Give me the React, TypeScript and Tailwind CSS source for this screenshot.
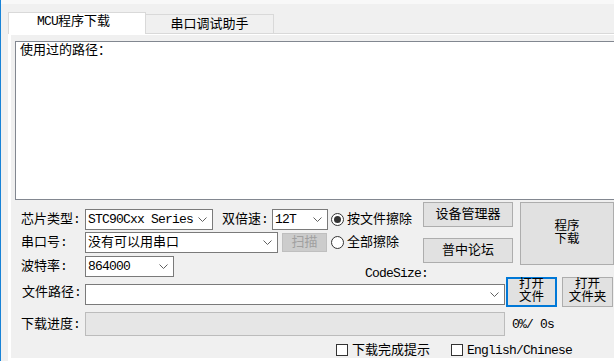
import React from "react";

function Chevron() {
  return (
    <svg width="9" height="5" viewBox="0 0 9 5" className="shrink-0">
      <path d="M0.5 0.5 L4.5 4.5 L8.5 0.5" fill="none" stroke="#606060" strokeWidth="1" />
    </svg>
  );
}

function Select({ className, children }: { className: string; children: React.ReactNode }) {
  return (
    <div
      className={
        "flex items-center justify-between h-[21px] border border-[#7a7a7a] bg-white pl-[2px] pr-[5px] shrink-0 " +
        className
      }
    >
      <span className="whitespace-pre">{children}</span>
      <Chevron />
    </div>
  );
}

function Label({ children }: { children: React.ReactNode }) {
  return <div className="w-[64px] shrink-0 whitespace-pre">{children}</div>;
}

function Radio({ checked, children, className }: { checked?: boolean; children: React.ReactNode; className: string }) {
  return (
    <div className={"flex items-center shrink-0 " + className}>
      <div className="w-[13px] h-[13px] rounded-full border border-[#333333] bg-white flex items-center justify-center">
        {checked ? <div className="w-[7px] h-[7px] rounded-full bg-[#333333]" /> : null}
      </div>
      <span className="ml-[3px]">{children}</span>
    </div>
  );
}

function Check({ children, className }: { children: React.ReactNode; className: string }) {
  return (
    <div className={"flex items-center shrink-0 " + className}>
      <div className="w-[12px] h-[12px] border border-[#333333] bg-white" />
      <span className="ml-[4px]">{children}</span>
    </div>
  );
}

function Latin({ children, className = "" }: { children: React.ReactNode; className?: string }) {
  return <span className={"text-[13px] tracking-[-0.8px] whitespace-pre " + className}>{children}</span>;
}

export default function App() {
  return (
    <div className="w-[614px] h-[361px] overflow-hidden bg-[#f0f0f0] border-l border-[#1883d7] flex flex-col font-['Liberation_Mono','Noto_Sans_CJK_SC',monospace] text-[13px] leading-none text-black">
      <div className="h-[4px] shrink-0 bg-[#f8f8f8]" />
      <div className="flex flex-col pl-[7px] pt-[8px] flex-1 min-h-0">
        {/* tab strip */}
        <div className="flex items-end h-[22px] relative z-10 -mb-px shrink-0">
          <div className="w-[138px] h-[22px] bg-white border-l border-t border-r border-[#d9d9d9] pl-[28px] pt-[2px] whitespace-pre">
            <Latin>MCU</Latin>程序下载
          </div>
          <div className="w-[128px] h-[19px] mb-px bg-[#f0f0f0] border-t border-r border-[#d9d9d9] flex justify-center pt-[3px]">
            串口调试助手
          </div>
        </div>
        {/* panel */}
        <div className="flex-1 min-h-0 border-t border-[#d9d9d9] bg-white pl-[3px] pt-px pb-[3px] flex flex-col">
          <div className="flex-1 bg-[#f0f0f0] flex flex-col">
            <div className="ml-[4px] mt-[6px] h-[159px] w-[620px] shrink-0 border border-[#828790] bg-white pl-[4px] pt-[2px]">
              使用过的路径：
            </div>

            {/* section A */}
            <div className="flex mt-[2px] ml-[10px] shrink-0">
              <div className="w-[402px] flex flex-col pt-[7px] shrink-0">
                <div className="flex items-center h-[21px]">
                  <Label>芯片类型:</Label>
                  <Select className="w-[128px]">
                    <Latin>STC90Cxx Series</Latin>
                  </Select>
                  <div className="ml-[9px] w-[50px] shrink-0 whitespace-pre">双倍速:</div>
                  <Select className="w-[56px]">
                    <Latin>12T</Latin>
                  </Select>
                  <Radio checked className="ml-[3px]">按文件擦除</Radio>
                </div>
                <div className="flex items-center h-[21px] mt-[2px]">
                  <Label>串口号:</Label>
                  <Select className="w-[193px]">没有可以用串口</Select>
                  <div className="ml-[4px] w-[45px] h-[19px] shrink-0 bg-[#cccccc] border border-[#bfbfbf] text-[#a0a0a0] flex items-center justify-center">
                    扫描
                  </div>
                  <Radio className="ml-[4px]">全部擦除</Radio>
                </div>
                <div className="flex items-center h-[21px] mt-[3px]">
                  <Label>波特率:</Label>
                  <Select className="w-[89px]">
                    <Latin>864000</Latin>
                  </Select>
                  <Latin className="ml-[191px] self-end -mb-[3px]">CodeSize:</Latin>
                </div>
              </div>
              <div className="w-[90px] flex flex-col shrink-0">
                <div className="h-[25px] bg-[#e1e1e1] border border-[#adadad] flex items-center justify-center">
                  设备管理器
                </div>
                <div className="h-[25px] mt-[11px] bg-[#e1e1e1] border border-[#adadad] flex items-center justify-center">
                  普中论坛
                </div>
              </div>
              <div className="ml-[7px] w-[94px] h-[63px] shrink-0 bg-[#e1e1e1] border border-[#adadad] flex items-center justify-center">
                <div className="text-center text-[12.5px] leading-[13px]">
                  程序
                  <br />
                  下载
                </div>
              </div>
            </div>

            {/* section B */}
            <div className="flex ml-[10px] h-[30px] shrink-0">
              <div className="self-center pl-px">
                <Label>文件路径:</Label>
              </div>
              <div className="mt-[7px] -ml-px">
                <Select className="w-[420px]">{""}</Select>
              </div>
              <div className="ml-px w-[51px] h-[30px] shrink-0 bg-[#e1e1e1] border-2 border-[#0078d7] flex items-center justify-center">
                <div className="text-center text-[12.5px] leading-[13px]">
                  打开
                  <br />
                  文件
                </div>
              </div>
              <div className="ml-[5px] w-[51px] h-[30px] shrink-0 bg-[#e1e1e1] border border-[#adadad] flex items-center justify-center">
                <div className="text-center text-[12.5px] leading-[13px]">
                  打开
                  <br />
                  文件夹
                </div>
              </div>
            </div>

            {/* section C */}
            <div className="flex items-center ml-[10px] mt-[5px] h-[24px] shrink-0">
              <Label>下载进度:</Label>
              <div className="w-[420px] h-[24px] shrink-0 border border-[#bcbcbc] bg-[#e6e6e6]" />
              <Latin className="ml-[7px]">0%/ 0s</Latin>
            </div>

            {/* section D */}
            <div className="flex items-center ml-[325px] mt-[8px] h-[12px] shrink-0">
              <Check className="">下载完成提示</Check>
              <Check className="ml-[21px]">
                <Latin>English/Chinese</Latin>
              </Check>
            </div>
          </div>
        </div>
      </div>
    </div>
  );
}
